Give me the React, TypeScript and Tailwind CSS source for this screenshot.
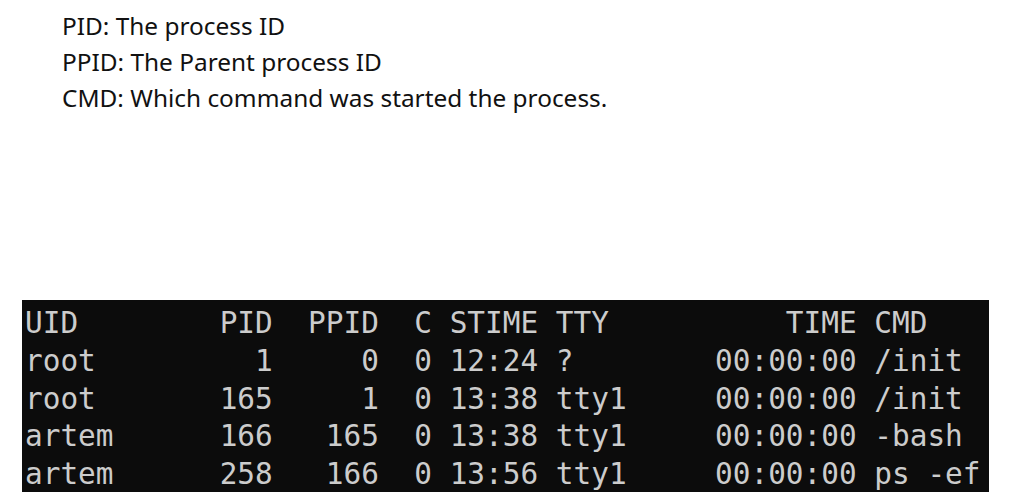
import React from "react";

const lines = [
  "UID        PID  PPID  C STIME TTY          TIME CMD",
  "root         1     0  0 12:24 ?        00:00:00 /init",
  "root       165     1  0 13:38 tty1     00:00:00 /init",
  "artem      166   165  0 13:38 tty1     00:00:00 -bash",
  "artem      258   166  0 13:56 tty1     00:00:00 ps -ef",
];

export default function App() {
  return (
    <div className="w-[1036px] h-[492px] overflow-hidden bg-white relative">
      <div
        className="pl-[62px] pt-[8px] text-[24.4px] leading-[36px] text-[#111111]"
        style={{ fontFamily: '"Noto Sans", "Open Sans", sans-serif' }}
      >
        <div>PID: The process ID</div>
        <div>PPID: The Parent process ID</div>
        <div>CMD: Which command was started the process.</div>
      </div>
      <div className="mt-[184px] ml-[22px] w-[967px] h-[200px] bg-[#0c0c0c] pl-[3px] pt-[5px]">
        <pre
          className="text-[29.4px] leading-[37.75px] text-[#cccccc] m-0"
          style={{ fontFamily: '"DejaVu Sans Mono", "Liberation Mono", monospace' }}
        >
          {lines.join("\n")}
        </pre>
      </div>
    </div>
  );
}
